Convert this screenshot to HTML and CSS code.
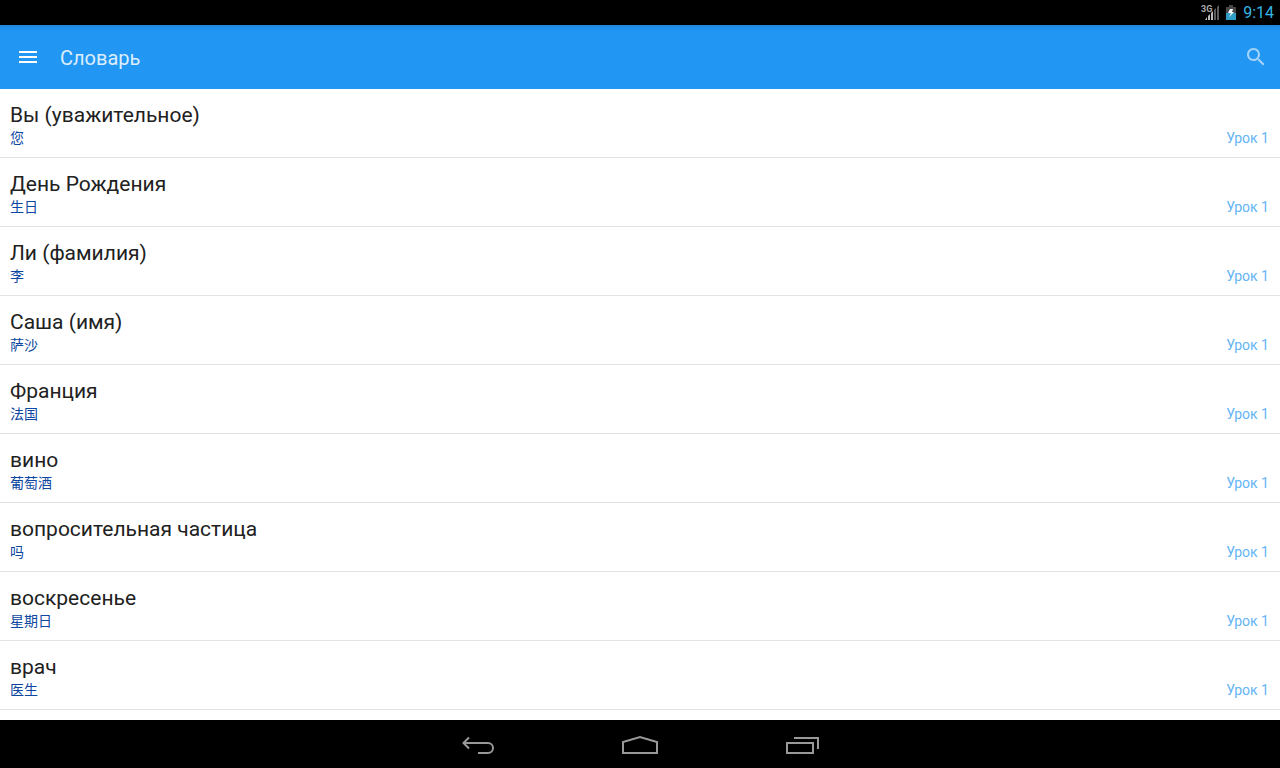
FILE: index.html
```html
<!DOCTYPE html>
<html lang="ru">
<head>
<meta charset="utf-8">
<title>Словарь</title>
<link rel="stylesheet" href="styles.css">
</head>
<body>
    <div class="status">
        <svg class="signal" width="20" height="17" viewBox="0 0 20 17">
            <path d="M4 16L6 13V16ZM7 16V12L9 10V16ZM10 16V9L12 7V16Z" fill="#bbb"/>
            <path d="M13 16V6L15 4V16ZM16 16V3L18 1V16Z" fill="#5a5a5a"/>
            <text class="net" x="0" y="8">3G</text>
        </svg>
        <svg class="battery" width="10" height="15" viewBox="0 0 10 15">
            <path d="M3 0h4v2h3v13H0V2h3z" fill="#484848"/>
            <path d="M0 8h10v7H0z" fill="#2f9dc4"/>
            <path d="M4 4h3L6 7h2L3 12L5 8H2z" fill="#fff"/>
        </svg>
        <span class="clock">9:14</span>
    </div>
    <header class="bar">
        <button class="menu" aria-label="Меню">
            <svg width="18" height="12" viewBox="0 0 18 12"><path d="M0 1h18M0 6h18M0 11h18" stroke="#fff" stroke-width="2"/></svg>
        </button>
        <h1>Словарь</h1>
        <button class="search" aria-label="Поиск">
            <svg width="24" height="24" viewBox="0 0 24 24"><path d="M15.5 14h-.79l-.28-.27C15.41 12.59 16 11.11 16 9.5 16 5.91 13.09 3 9.5 3S3 5.91 3 9.5 5.91 16 9.5 16c1.61 0 3.09-.59 4.23-1.57l.27.28v.79l5 4.99L20.49 19l-4.99-5zm-6 0C7.01 14 5 11.99 5 9.5S7.01 5 9.5 5 14 7.01 14 9.5 11.99 14 9.5 14z" fill="#a6d3fa"/></svg>
        </button>
    </header>
    <ul class="words">
        <li><h2>Вы (уважительное)</h2><div class="info"><span class="hanzi" lang="zh">您</span><span class="lesson">Урок 1</span></div></li>
        <li><h2>День Рождения</h2><div class="info"><span class="hanzi" lang="zh">生日</span><span class="lesson">Урок 1</span></div></li>
        <li><h2>Ли (фамилия)</h2><div class="info"><span class="hanzi" lang="zh">李</span><span class="lesson">Урок 1</span></div></li>
        <li><h2>Саша (имя)</h2><div class="info"><span class="hanzi" lang="zh">萨沙</span><span class="lesson">Урок 1</span></div></li>
        <li><h2>Франция</h2><div class="info"><span class="hanzi" lang="zh">法国</span><span class="lesson">Урок 1</span></div></li>
        <li><h2>вино</h2><div class="info"><span class="hanzi" lang="zh">葡萄酒</span><span class="lesson">Урок 1</span></div></li>
        <li><h2>вопросительная частица</h2><div class="info"><span class="hanzi" lang="zh">吗</span><span class="lesson">Урок 1</span></div></li>
        <li><h2>воскресенье</h2><div class="info"><span class="hanzi" lang="zh">星期日</span><span class="lesson">Урок 1</span></div></li>
        <li><h2>врач</h2><div class="info"><span class="hanzi" lang="zh">医生</span><span class="lesson">Урок 1</span></div></li>
    </ul>
    <nav class="keys">
        <button aria-label="Назад">
            <svg width="36" height="20" viewBox="0 0 36 20"><path d="M4 8H28a5 5 0 0 1 0 10H18M9 2.500L3.500 8L9 13.500" fill="none" stroke="#999" stroke-width="2"/></svg>
        </button>
        <button aria-label="Домой">
            <svg width="36" height="20" viewBox="0 0 36 20"><path d="M1 18V7L18 2L35 7V18Z" fill="none" stroke="#999" stroke-width="2"/></svg>
        </button>
        <button aria-label="Недавние">
            <svg width="36" height="20" viewBox="0 0 36 20"><path d="M3 8H29V18H3ZM10 3H34V14" fill="none" stroke="#999" stroke-width="2"/></svg>
        </button>
    </nav>
</body>
</html>
```
FILE: styles.css
```css
body
{
    margin: 0;
    height: 100vh;
    display: flex;
    flex-direction: column;
    background-color: #fff;
    font-family: Roboto, "Noto Sans CJK SC", sans-serif;
}
button
{
    display: flex;
    align-items: center;
    justify-content: center;
    padding: 0;
    border: none;
    background: none;
}
.status
{
    display: flex;
    align-items: center;
    justify-content: flex-end;
    flex: none;
    height: 25px;
    padding-right: 6px;
    background-color: #000;
    color: #33b5e5;
}
.signal
{
    margin-right: 5px;
}
.battery
{
    margin-right: 7px;
}
.net
{
    font-size: 9px;
    font-weight: bold;
    fill: #aaa;
}
.clock
{
    font-size: 16px;
}
.bar
{
    display: flex;
    align-items: center;
    flex: none;
    height: 64px;
    padding: 0 12px 0 19px;
    background: linear-gradient(#1e88dc, #2196f3 6px);
}
.bar h1
{
    flex: 1;
    margin: 0 0 0 23px;
    padding-top: 2px;
    color: #dceefd;
    font-size: 20px;
    font-weight: normal;
}
.words
{
    flex: 1;
    min-height: 0;
    margin: 0;
    padding: 0;
    overflow: hidden;
    list-style: none;
}
.words li
{
    padding: 12px 11px 10px 10px;
    border-bottom: 1px solid #e3e3e3;
}
.words h2
{
    margin: 0;
    color: #212121;
    font-size: 21px;
    font-weight: normal;
    line-height: 28px;
}
.info
{
    display: flex;
    justify-content: space-between;
    font-size: 14px;
    line-height: 18px;
}
.hanzi
{
    color: #0d47a1;
}
.lesson
{
    color: #64b5f6;
}
.keys
{
    display: flex;
    justify-content: center;
    flex: none;
    height: 48px;
    padding-top: 2px;
    box-sizing: border-box;
    background-color: #000;
}
.keys button
{
    width: 162px;
}
```
